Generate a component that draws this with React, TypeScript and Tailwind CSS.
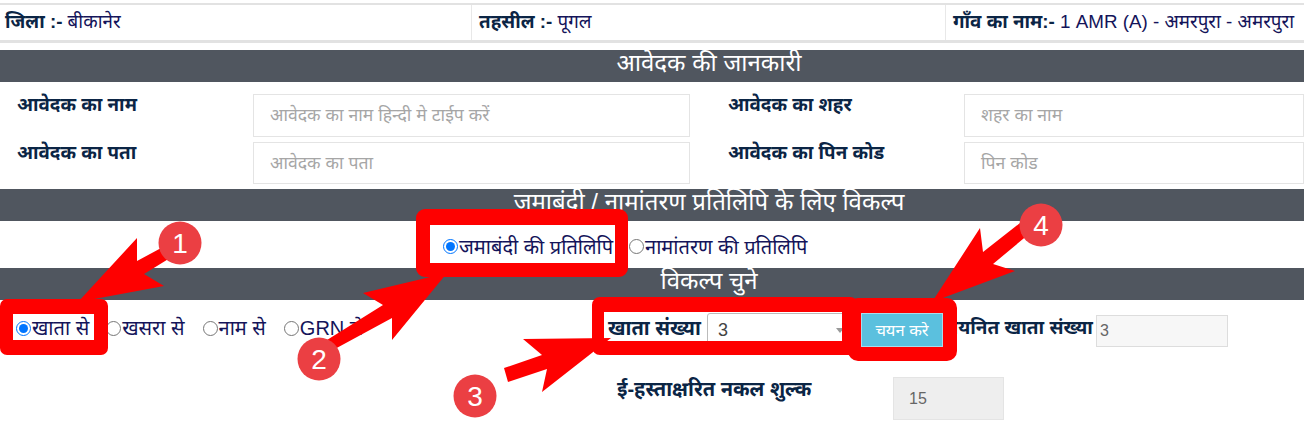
const font = "font-['Liberation_Sans','Noto_Sans',sans-serif]";

function Bar({ title, className }: { title: string; className?: string }) {
  return (
    <div className={`h-[32px] bg-[#50565f] pl-[114px] text-center text-[24px] leading-[26px] text-white ${className ?? ""}`}>
      {title}
    </div>
  );
}

function Radio({ label, checked, className }: { label: string; checked?: boolean; className?: string }) {
  return (
    <label className={`flex items-center gap-[1px] whitespace-nowrap text-[20px] leading-[26px] text-[#14145a] ${className ?? ""}`}>
      <input type="radio" readOnly checked={!!checked} className="m-0 h-[15px] w-[15px] shrink-0" />
      {label}
    </label>
  );
}

function Field({ label, placeholder, labelClass }: { label: string; placeholder: string; labelClass: string }) {
  return (
    <>
      <div className={`text-[18.8px] font-bold leading-[22px] text-[#0b2545] ${labelClass}`}>{label}</div>
      <div className="flex items-center border border-[#e4e4e4] pl-[16px] text-[17.6px] text-[#a6a6a6]">
        {placeholder}
      </div>
    </>
  );
}

// annotation layer: red boxes, arrows, numbered badges
function Markup() {
  const boxes = [
    "M7 299H101a7 7 0 0 1 7 7V348a7 7 0 0 1-7 7H7a7 7 0 0 1-7-7V306a7 7 0 0 1 7-7ZM13 314V340H94V314Z",
    "M425 209H619a9 9 0 0 1 9 9V268a9 9 0 0 1-9 9H425a9 9 0 0 1-9-9V218a9 9 0 0 1 9-9ZM430 225V263H615V225Z",
    "M600 297H850a8 8 0 0 1 8 8V347a8 8 0 0 1-8 8H600a8 8 0 0 1-8-8V305a8 8 0 0 1 8-8ZM604 312V341H842V312Z",
    "M858 298H947a10 10 0 0 1 10 10V351a10 10 0 0 1-10 10H858a10 10 0 0 1-10-10V308a10 10 0 0 1 10-10ZM861 313V347H943V313Z",
  ];
  const arrows = [
    "78,302 137,238 137,261 163,247 170,258 144,274 164,286",
    "447,273 363,293 383,305 327,340 333,350 392,318 392,340",
    "611,338 523,339 542,355 504,368 508,382 547,369 542,392",
    "932,302 980,228 983,252 1020,223 1029,234 993,264 1015,271",
  ];
  const badges = [
    { n: 1, x: 180, y: 243 },
    { n: 2, x: 319, y: 359 },
    { n: 3, x: 475, y: 396 },
    { n: 4, x: 1041, y: 225 },
  ];
  return (
    <svg className="absolute inset-0 h-[425px] w-[1304px]" viewBox="0 0 1304 425">
      {boxes.map((d) => (
        <path key={d} d={d} fill="#fe0000" fillRule="evenodd" />
      ))}
      {arrows.map((p) => (
        <polygon key={p} points={p} fill="#fe0000" />
      ))}
      {badges.map((b) => (
        <g key={b.n}>
          <circle cx={b.x} cy={b.y} r="21.5" fill="#eb3f43" />
          <text
            x={b.x}
            y={b.y + 10}
            textAnchor="middle"
            fill="#fff"
            fontSize="28"
            fontFamily="Liberation Sans"
          >
            {b.n}
          </text>
        </g>
      ))}
    </svg>
  );
}

export default function App() {
  return (
    <div className={`relative h-[425px] w-[1304px] overflow-hidden bg-white pt-[3px] ${font}`}>
      <div className="grid h-[40px] grid-cols-[471px_474px_1fr] border-t-2 border-b-[3px] border-[#e2e2e2] text-[18.8px] leading-[33px] text-[#14145a]">
        <div className="pl-[5px]">
          <b className="text-[#0b2545]">जिला :-</b> बीकानेर
        </div>
        <div className="border-l border-[#e8e8e8] pl-[7px]">
          <b className="text-[#0b2545]">तहसील :-</b> पूगल
        </div>
        <div className="whitespace-nowrap border-l border-[#e8e8e8] pl-[7px]">
          <b className="text-[#0b2545]">गाँव का नाम:-</b> 1 AMR (A) - अमरपुरा - अमरपुरा
        </div>
      </div>

      <Bar title="आवेदक की जानकारी" className="mt-[7px]" />

      <div className="grid grid-cols-[253px_437px_274px_340px] grid-rows-[43px_42px] gap-y-[5px] pt-[12px]">
        <Field label="आवेदक का नाम" placeholder="आवेदक का नाम हिन्दी मे टाईप करें" labelClass="pl-[17px]" />
        <Field label="आवेदक का शहर" placeholder="शहर का नाम" labelClass="pl-[38px]" />
        <Field label="आवेदक का पता" placeholder="आवेदक का पता" labelClass="pl-[17px]" />
        <Field label="आवेदक का पिन कोड" placeholder="पिन कोड" labelClass="pl-[38px]" />
      </div>

      <Bar title="जमाबंदी / नामांतरण प्रतिलिपि के लिए विकल्प" className="mt-[5px]" />

      <div className="flex h-[47px] items-center pl-[443px] pt-[4px]">
        <Radio label="जमाबंदी की प्रतिलिपि" checked />
        <Radio label="नामांतरण की प्रतिलिपि" className="ml-[16px]" />
      </div>

      <Bar title="विकल्प चुने" />

      <div className="flex h-[56px] items-center">
        <div className="flex w-[608px] shrink-0 items-center pl-[16px]">
          <Radio label="खाता से" checked />
          <Radio label="खसरा से" className="ml-[17px]" />
          <Radio label="नाम से" className="ml-[18px]" />
          <Radio label="GRN से" className="ml-[18px]" />
        </div>
        <div className="w-[99px] shrink-0 whitespace-nowrap text-[20px] font-bold leading-[26px] text-[#0b2545]">खाता संख्या</div>
        <div className="mt-[5px] flex h-[36px] w-[139px] shrink-0 items-center justify-between rounded-[3px] border border-[#bbb] pl-[10px] pr-[1px] text-[18px] text-[#444]">
          3
          <span className="h-0 w-0 border-x-[4px] border-t-[5px] border-x-transparent border-t-[#999]" />
        </div>
        <button className="ml-[15px] mt-[4px] h-[34px] w-[82px] shrink-0 border border-[#a9dcec] bg-[#5bc0de] text-[16.5px] text-white">चयन करे</button>
        <div className="ml-[2px] w-[151px] shrink-0 whitespace-nowrap text-[19px] font-bold leading-[26px] text-[#0b2545]">चयनित खाता संख्या</div>
        <div className="mt-[6px] h-[32px] w-[132px] shrink-0 border border-[#ddd] bg-[#f7f7f7] pl-[3px] text-[16px] leading-[30px] text-[#666]">
          3
        </div>
      </div>

      <div className="flex items-start pl-[617px] pt-[21px]">
        <div className="w-[276px] whitespace-nowrap text-[20px] font-bold leading-[24px] text-[#0b2545]">
          ई-हस्ताक्षरित नकल शुल्क
        </div>
        <div className="h-[43px] w-[111px] border border-[#e4e4e4] bg-[#eeeeee] pl-[15px] text-[16px] leading-[41px] text-[#666]">
          15
        </div>
      </div>

      <Markup />
    </div>
  );
}
